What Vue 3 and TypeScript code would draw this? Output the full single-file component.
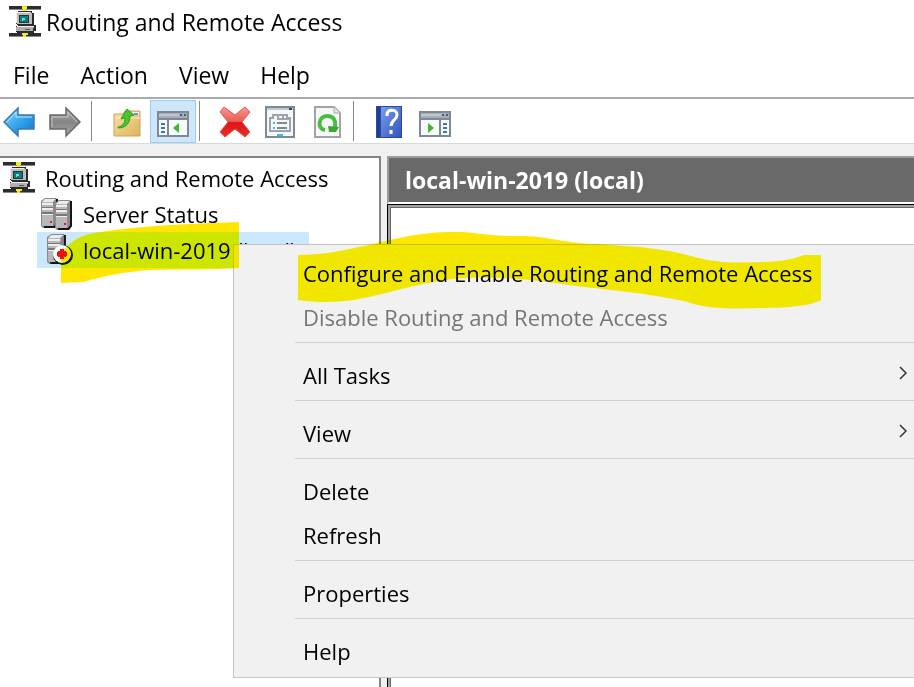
<script setup lang="ts">
import { ref } from 'vue'

interface MenuEntry {
  label: string
  disabled?: boolean
  submenu?: boolean
}

const menus: string[] = ['File', 'Action', 'View', 'Help']
const serverName = ref('local-win-2019')

const groups: MenuEntry[][] = [
  [
    { label: 'Configure and Enable Routing and Remote Access' },
    { label: 'Disable Routing and Remote Access', disabled: true },
  ],
  [{ label: 'All Tasks', submenu: true }],
  [{ label: 'View', submenu: true }],
  [{ label: 'Delete' }, { label: 'Refresh' }],
  [{ label: 'Properties' }],
  [{ label: 'Help' }],
]
</script>

<template>
  <div class="window">
    <svg class="defs" aria-hidden="true">
      <defs>
        <linearGradient id="blue" x1="0" y1="0" x2="1" y2="1">
          <stop offset="0" stop-color="#8fd8fb" />
          <stop offset="0.5" stop-color="#35a5ec" />
          <stop offset="1" stop-color="#1272cf" />
        </linearGradient>
        <linearGradient id="gray" x1="0" y1="0" x2="0" y2="1">
          <stop offset="0" stop-color="#b4b4b4" />
          <stop offset="0.5" stop-color="#858585" />
          <stop offset="1" stop-color="#a5a5a5" />
        </linearGradient>
        <linearGradient id="red" x1="0" y1="0" x2="0" y2="1">
          <stop offset="0" stop-color="#f59a92" />
          <stop offset="0.48" stop-color="#ee5a55" />
          <stop offset="0.52" stop-color="#de1414" />
          <stop offset="1" stop-color="#e8302a" />
        </linearGradient>
        <linearGradient id="folder" x1="0" y1="0" x2="1" y2="1">
          <stop offset="0" stop-color="#f8e2a4" />
          <stop offset="1" stop-color="#dcb35c" />
        </linearGradient>
        <linearGradient id="book" x1="0" y1="0" x2="1" y2="1">
          <stop offset="0" stop-color="#7c9bea" />
          <stop offset="1" stop-color="#2f55c4" />
        </linearGradient>
        <symbol id="router" viewBox="0 0 32 32">
          <path d="M0 0h32v3H0zM0 27h32v3H0z" fill="#2c2c2c" />
          <path d="M0 3h32v1H0zM0 30h32v1H0z" fill="#8a8a8a" />
          <path d="M13 0h5v3h-1v2h-3V3h-1zM13 27h1v-1h3v1h2v2h-2v2h-3v-2h-1z" fill="#f4ec20" />
          <path d="M9 5h14v2h2v12h2v6h-2v2H8v-1H7v-6h2v-1H8v-1H7V7h2z" fill="#2a2a2a" />
          <path d="M8 6h14v1h1v11H8v-1H7V7h1z" fill="#bcbcbc" />
          <path d="M8 6h13v1H8v10H7V7h1z" fill="#eee" />
          <path d="M10 9h10v8H10z" fill="#303030" />
          <path d="M11 10h8v6h-8z" fill="#087f83" />
          <path d="M13 12h3v2h-2v1h-1z" fill="#66e4dd" />
          <path d="M8 20h17v2h-1v3H7v-4h1z" fill="#b0b0b0" />
          <path d="M8 20h17v1H8z" fill="#eee" />
          <path d="M16 23h5v1h-5z" fill="#555" />
        </symbol>
        <symbol id="tower" viewBox="0 0 18 30" preserveAspectRatio="none">
          <path d="M4 0h11l2 2v24l-3 4H2l-2-2V3z" fill="#8a8a8a" />
          <path d="M15 1h2v25l-3 4H3v-2h10l2-3z" fill="#151515" />
          <path d="M4 1h11l-3 3H1z" fill="#ececec" />
          <path d="M1 4h11v24H2l-1-1z" fill="#b8b8b8" />
          <path d="M12 4l3-3v24l-3 3z" fill="#8c8c8c" />
          <path d="M1 5h11v2H1zM1 10h11v2H1zM1 16h11v1H1z" fill="#eee" />
          <path d="M1 9h11v1H1zM1 14h11v2H1z" fill="#777" />
          <path d="M9 23h2v2H9z" fill="#d91d32" />
        </symbol>
      </defs>
    </svg>

    <header class="title-bar">
      <svg class="icon" viewBox="0 0 32 32" aria-hidden="true"><use href="#router" /></svg>
      <h1>Routing and Remote Access</h1>
    </header>

    <nav class="menu-bar" aria-label="Main menu">
      <button v-for="name in menus" :key="name" type="button">{{ name }}</button>
    </nav>

    <div class="toolbar" role="toolbar" aria-label="Console tools">
      <button type="button" aria-label="Back">
        <svg class="icon" viewBox="0 0 32 32">
          <path d="M1 16 15 2v7h16v14H15v7z" fill="url(#blue)" stroke="#3b79ad" stroke-width="1.5" />
          <path d="M4 16 13 6v5h16" fill="none" stroke="#b7e9ff" />
        </svg>
      </button>
      <button type="button" aria-label="Forward">
        <svg class="icon" viewBox="0 0 32 32">
          <path d="M31 16 17 2v7H1v14h16v7z" fill="url(#gray)" stroke="#686868" stroke-width="1.5" />
          <path d="M3 21V11h16V6l9 10" fill="none" stroke="#c9c9c9" />
        </svg>
      </button>
      <span class="divider"></span>
      <button class="after-divider" type="button" aria-label="Up one level">
        <svg class="icon" viewBox="0 0 32 32">
          <path d="M3 8h9l2-3h15v25H3z" fill="url(#folder)" stroke="#c9a45c" />
          <path d="M18 6h10v3H18z" fill="#fff3d0" />
          <path d="M23 7h4v2h-4z" fill="#559bd7" />
          <path d="M4 12h25" stroke="#fff0c3" />
          <path d="M7 21c5-1 7-4 7-9l-4 1 6-10 7 6-4 1c0 7-4 12-12 12z" fill="#49c52d" stroke="#2b9b24" />
        </svg>
      </button>
      <button class="pressed" type="button" aria-pressed="true" aria-label="Show or hide console tree">
        <svg class="icon" viewBox="0 0 32 32">
          <path d="M1 6h30v24H1z" fill="#f7f9fa" stroke="#7d8995" stroke-width="2" />
          <path d="M2 7h28v5H2z" fill="#a4afba" />
          <path d="M2 9h20" stroke="#dbe1e6" />
          <path d="M2 13h28M11 13v17" stroke="#7d8995" stroke-width="2" />
          <path d="M23 8h2v2h-2zM27 8h2v2h-2z" fill="#465e78" />
          <path d="M4 18h4M4 22h4M4 26h4" stroke="#3f77a9" stroke-width="2" />
          <path d="M22 17v10l-6-5z" fill="#3fb62d" />
        </svg>
      </button>
      <span class="divider"></span>
      <button class="after-divider" type="button" aria-label="Delete">
        <svg class="icon" viewBox="0 0 32 32">
          <path d="m5 1 11 8L26 1l5 5-8 10 8 10-5 5-10-8-10 8-5-5 8-10L1 6z" fill="url(#red)" stroke="#d65b55" />
        </svg>
      </button>
      <button type="button" aria-label="Properties">
        <svg class="icon" viewBox="0 0 32 32">
          <path d="M1 1h28v30H1z" fill="#f5f7f8" stroke="#7d8995" stroke-width="2" />
          <path d="M2 2h26v2H2z" fill="#c1c9d1" />
          <path d="M24 2h3v2h-3z" fill="#344658" />
          <path d="M5 12h3V9h14v3h3v13H5zM13 9v4h12M18 9v4" fill="none" stroke="#9aa4af" stroke-width="2" />
          <path d="M12 17h10M12 22h10" stroke="#7d8995" stroke-width="2" />
          <path d="M8 16h2v2H8zM8 21h2v2H8zM12 28h6v2h-6z" fill="#39bde5" />
        </svg>
      </button>
      <button type="button" aria-label="Refresh">
        <svg class="icon" viewBox="0 0 32 32">
          <path d="M4 1h19l6 6v24H4z" fill="#f7f7f7" stroke="#a3a3a3" stroke-width="2" />
          <path d="M23 1v6h6" fill="#e2e2e2" stroke="#aaa" />
          <path d="M14 24c-8-1-7-14 2-14 7 0 9 5 8 11" fill="none" stroke="#48bd42" stroke-width="4" />
          <path d="m17 20 11 1-3 5h-7z" fill="#38a936" />
        </svg>
      </button>
      <span class="divider"></span>
      <button class="after-divider" type="button" aria-label="Help">
        <svg class="icon" viewBox="0 0 32 32">
          <path d="M3 0h26v32H3z" fill="#2b49a4" />
          <path d="M8 1h20v30H8z" fill="url(#book)" />
          <path d="M4 1h3v30H4z" fill="#203d91" />
          <path d="M14 10V8c1-5 10-5 10 1 0 5-6 5-6 11M18 24v4" fill="none" stroke="#fff" stroke-width="3" />
        </svg>
      </button>
      <button type="button" aria-label="Show or hide action pane">
        <svg class="icon" viewBox="0 0 32 32">
          <path d="M1 6h30v24H1z" fill="#f7f9fa" stroke="#7d8995" stroke-width="2" />
          <path d="M2 7h28v5H2z" fill="#a4afba" />
          <path d="M2 9h20" stroke="#dbe1e6" />
          <path d="M2 13h28M21 13v17" stroke="#7d8995" stroke-width="2" />
          <path d="M23 8h2v2h-2zM27 8h2v2h-2z" fill="#465e78" />
          <path d="M24 18h4M24 22h4M24 26h4" stroke="#3f77a9" stroke-width="2" />
          <path d="M9 17v10l6-5z" fill="#3fb62d" />
        </svg>
      </button>
    </div>

    <main class="workspace">
      <section class="tree-pane" aria-label="Console tree">
        <ul>
          <li class="root-row">
            <svg class="icon" viewBox="0 0 32 32" aria-hidden="true"><use href="#router" /></svg>
            <span class="label">Routing and Remote Access</span>
          </li>
          <li class="child-row">
            <svg class="icon" viewBox="0 0 32 32" aria-hidden="true">
              <use href="#tower" x="0" y="0" width="18" height="30" />
              <use href="#tower" x="14" y="2" width="18" height="30" />
            </svg>
            <span class="label">Server Status</span>
          </li>
          <li class="child-row selected" aria-current="true">
            <svg class="icon" viewBox="0 0 32 32" aria-hidden="true">
              <use href="#tower" x="6" y="0" width="20" height="30" />
              <circle cx="22" cy="21" r="10" fill="#111" />
              <circle cx="21" cy="20" r="9" fill="#fff" />
              <path d="M19 15h4v2h2v1h1v4h-1v1h-2v2h-4v-2h-2v-1h-1v-4h1v-1h2z" fill="#f01010" />
            </svg>
            <span class="label">{{ serverName }} (local)</span>
          </li>
        </ul>
      </section>
      <section class="detail-pane">
        <h2>{{ serverName }} (local)</h2>
        <div class="detail-body"></div>
      </section>
    </main>

    <div class="context-menu" role="menu">
      <div v-for="(group, index) in groups" :key="index" class="group" role="group">
        <button
          v-for="entry in group"
          :key="entry.label"
          type="button"
          role="menuitem"
          :disabled="entry.disabled"
        >
          <span>{{ entry.label }}</span>
          <svg v-if="entry.submenu" class="chevron" viewBox="0 0 8 14" aria-hidden="true">
            <path d="m1 1 6 6-6 6" fill="none" stroke="#333" stroke-width="1.5" />
          </svg>
        </button>
      </div>
    </div>

    <svg class="marker server-marker" viewBox="0 0 178 62" aria-hidden="true">
      <path d="M0 61V34C5 22 16 14 33 11 66 5 118 2 178 0v46c-24 2-60 1-89 2-28 2-45 6-67 12z" fill="#ffe600" />
    </svg>
    <svg class="marker command-marker" viewBox="0 0 524 78" aria-hidden="true">
      <path
        d="M0 23c24 0 43-4 66-9C97 7 117 1 151 0c21-1 35 4 66 4 30-1 42 6 78 8 44 2 74 5 102 13 23 6 38 6 66 5 22 0 35-4 43-7h17v45c-10 6-34 8-62 8-31 1-52 1-75-7-45-9-76-11-108-15-44-7-86-11-124-7-26 4-40 7-66 14-29 7-51 12-88 7z"
        fill="#ffe600"
      />
    </svg>
  </div>
</template>

<style>
body {
  margin: 0;
  overflow: hidden;
}
</style>

<style scoped>
.window {
  position: relative;
  display: flex;
  flex-direction: column;
  min-height: 100vh;
  overflow: hidden;
  background: #fff;
  color: #000;
  font: 22px/36px "Open Sans", "Noto Sans", sans-serif;
}
.defs {
  position: absolute;
  width: 0;
  height: 0;
}
button {
  margin: 0;
  padding: 0;
  border: 0;
  background: none;
  color: inherit;
  font: inherit;
}
.icon {
  display: block;
  flex: none;
  width: 32px;
  height: 32px;
}
.title-bar {
  display: flex;
  align-items: center;
  gap: 5px;
  padding: 4px 9px 11px;
}
h1 {
  margin: 0;
  font-size: 23px;
  font-weight: 400;
  line-height: 36px;
}
.menu-bar {
  display: flex;
  gap: 31px;
  padding: 6px 13px 4px;
  font-size: 23px;
}
.toolbar {
  display: flex;
  align-items: center;
  height: 44px;
  padding-left: 3px;
  border-top: 2px solid #a9a9ae;
  border-bottom: 1px solid #d5dbd8;
}
.toolbar button {
  display: flex;
  align-items: center;
  justify-content: center;
  box-sizing: border-box;
  width: 46px;
  height: 44px;
  padding-top: 2px;
}
.toolbar button:first-child {
  width: 32px;
  margin-right: 7px;
}
.toolbar .pressed {
  height: 43px;
  border: 1px solid #99cdf5;
  background: #cde6fa;
}
.divider {
  width: 1px;
  height: 40px;
  margin: 0 3px;
  background: #888;
}
.toolbar .after-divider {
  margin-left: 9px;
}
.workspace {
  display: flex;
  flex: 1;
  gap: 6px;
  padding-top: 12px;
  background: #f0f0f0;
}
.tree-pane {
  flex: 0 0 379px;
  border-top: 2px solid #828488;
  border-right: 2px solid #828488;
  background: #fff;
}
ul {
  margin: 0;
  padding: 2px 0 0;
  list-style: none;
}
li {
  display: flex;
  align-items: center;
  height: 36px;
}
.root-row {
  gap: 10px;
  padding-left: 3px;
}
.child-row {
  gap: 10px;
  width: 268px;
  margin-left: 37px;
  padding-left: 4px;
}
.label {
  white-space: nowrap;
}
.selected {
  background: #cce8ff;
}
.detail-pane {
  display: flex;
  flex: 1;
  flex-direction: column;
  min-width: 0;
}
h2 {
  margin: 0;
  padding: 4px 16px;
  border-top: 2px solid #9c9c9c;
  border-left: 2px solid #9c9c9c;
  border-bottom: 2px solid #fff;
  background: #696969;
  color: #fff;
  font-size: 23px;
  font-weight: 700;
  line-height: 36px;
}
.detail-body {
  flex: 1;
  border-top: 1px solid #000;
  border-left: 1px solid #000;
  background: #fff;
  box-shadow: inset 2px 2px 0 #a0a0a0, inset 3px 3px 0 #696969;
}
.context-menu {
  position: absolute;
  top: 244px;
  right: -2px;
  left: 233px;
  padding: 7px 0 3px;
  border: 1px solid #c4c4c4;
  background: #f1f1f1;
}
.group + .group {
  margin: 2px 0 0 61px;
  padding-top: 11px;
  border-top: 1px solid #d0d0d0;
}
.context-menu button {
  display: flex;
  align-items: center;
  justify-content: space-between;
  width: 100%;
  height: 44px;
  padding: 0 8px 2px;
  text-align: left;
}
.group:first-child button {
  padding-left: 69px;
}
.context-menu button:disabled {
  color: #767676;
}
.chevron {
  width: 8px;
  height: 14px;
  margin-bottom: 4px;
}
.marker {
  position: absolute;
  pointer-events: none;
  mix-blend-mode: darken;
}
.server-marker {
  top: 222px;
  left: 61px;
  width: 178px;
  height: 62px;
}
.command-marker {
  top: 232px;
  left: 298px;
  width: 524px;
  height: 78px;
}
</style>
